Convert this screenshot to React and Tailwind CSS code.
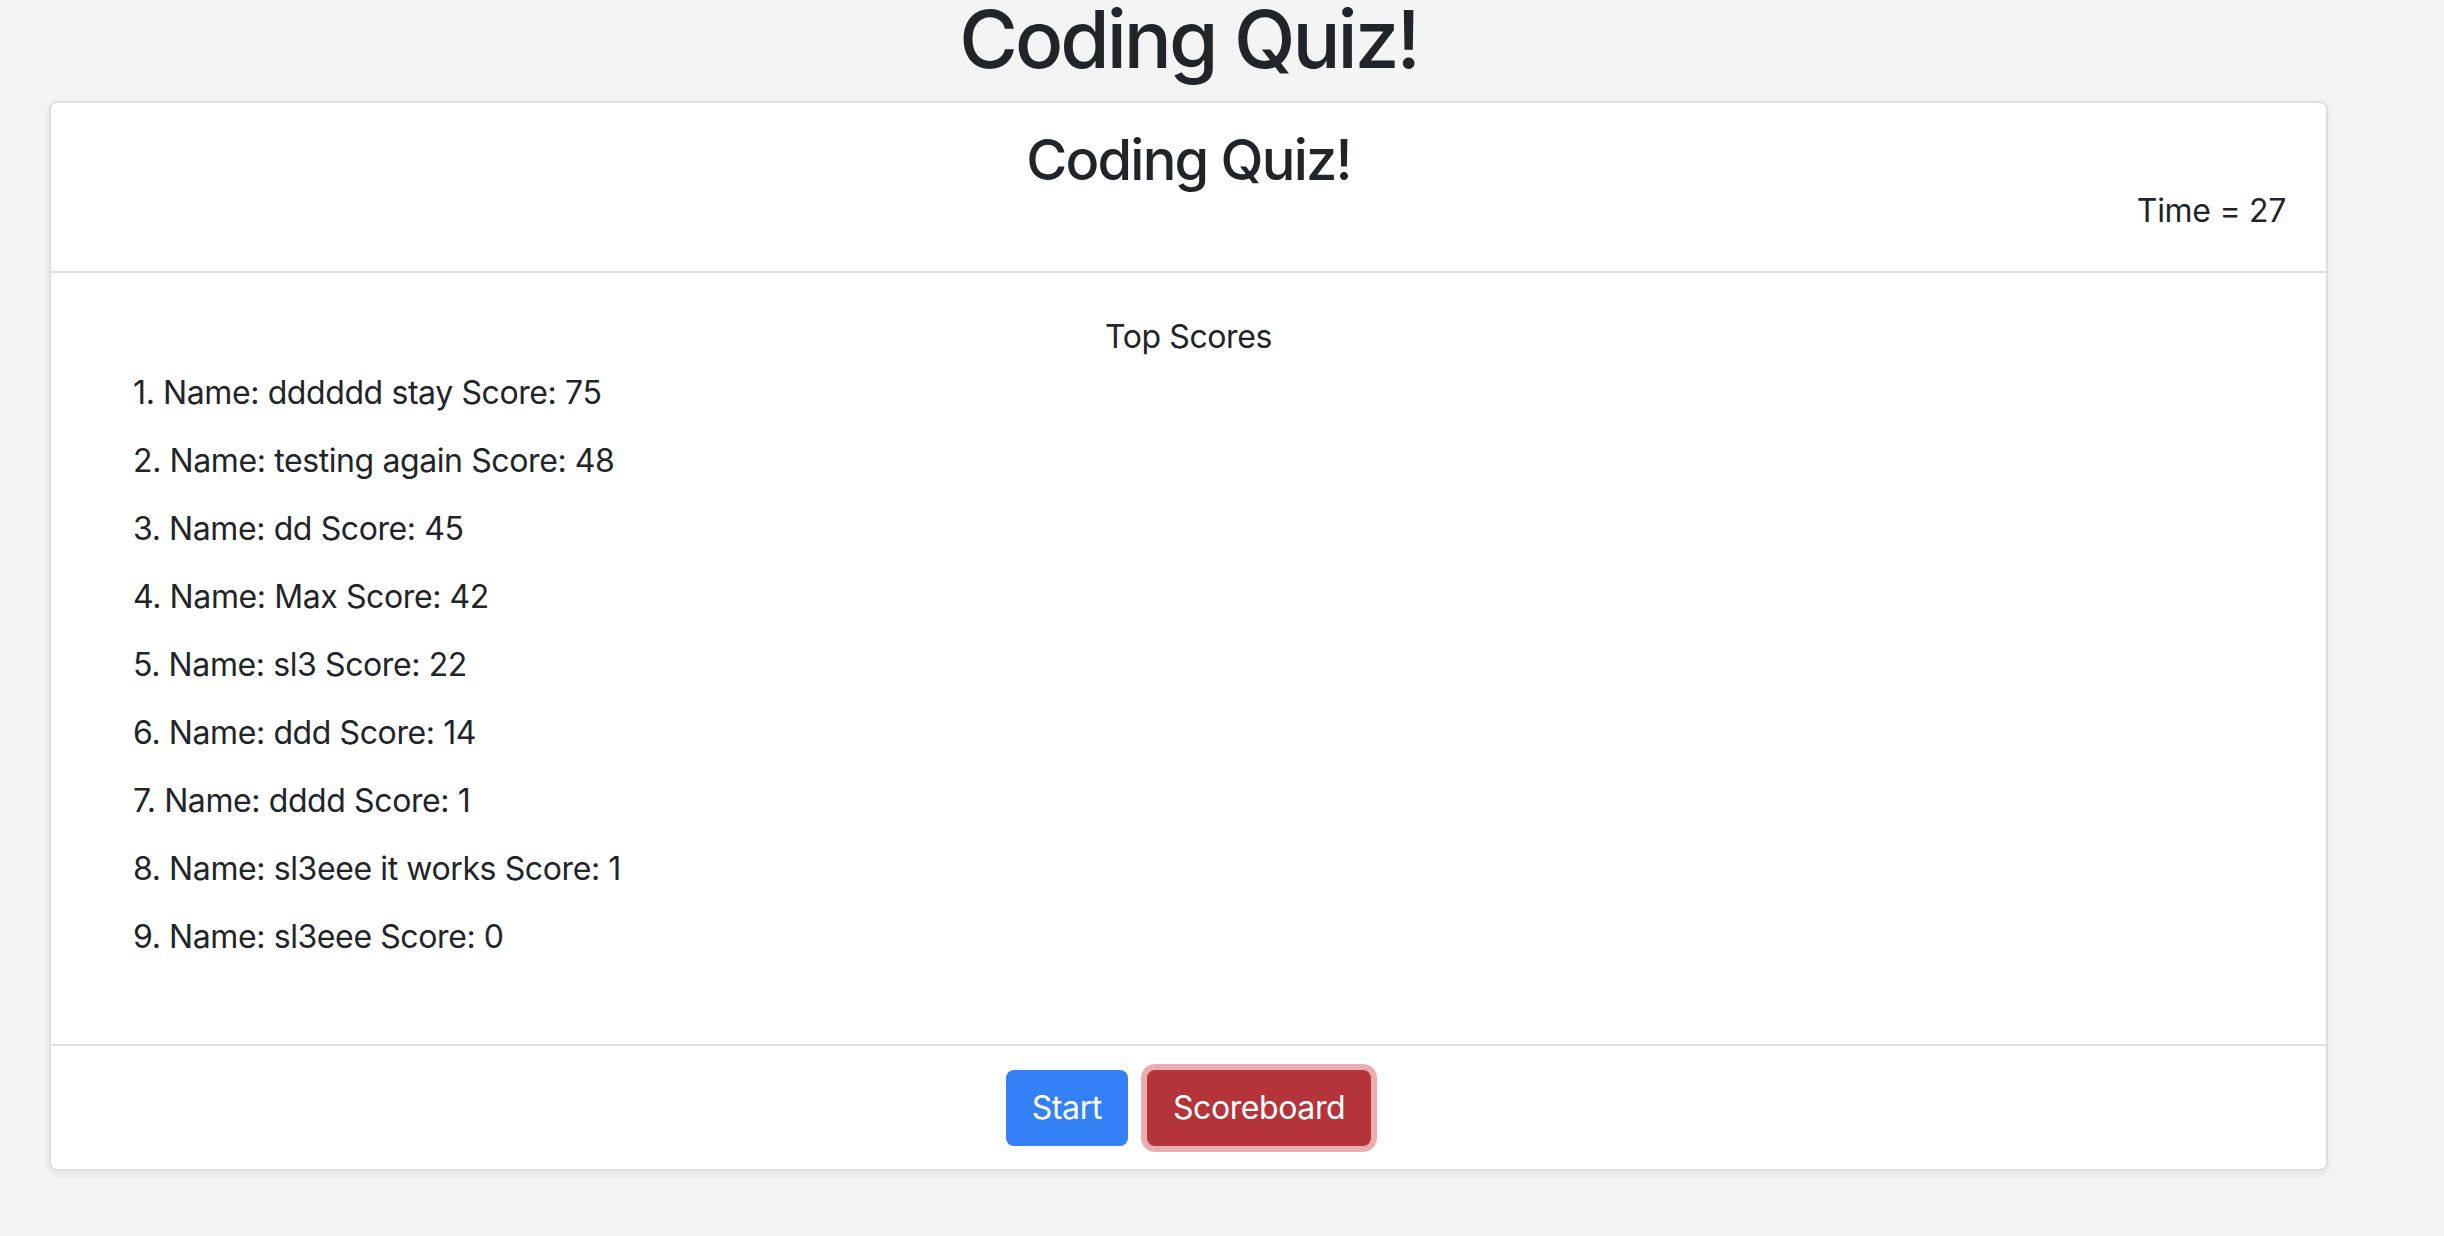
import React from "react";

const scores = [
  { name: "dddddd stay", score: 75 },
  { name: "testing again", score: 48 },
  { name: "dd", score: 45 },
  { name: "Max", score: 42 },
  { name: "sl3", score: 22 },
  { name: "ddd", score: 14 },
  { name: "dddd", score: 1 },
  { name: "sl3eee it works", score: 1 },
  { name: "sl3eee", score: 0 },
];

export default function App() {
  return (
    <div className="min-h-[1236px] w-full bg-[#f4f4f4] font-['Inter',sans-serif] text-[#212529]">
      <div className="ml-[49px] w-[2279px]">
        <h1 className="text-center text-[80px] leading-[78px] font-medium tracking-[-3px] mb-[23px]">Coding Quiz!</h1>
        <div className="rounded-[8px] border-2 border-[#dfdfdf] bg-white shadow-[0_3px_8px_rgba(0,0,0,0.07)]">
          <div className="border-b-2 border-[#dfdfdf] px-[40px] pt-[24px] pb-[36px]">
            <h3 className="text-center text-[56px] leading-[67px] font-medium tracking-[-1.8px]">Coding Quiz!</h3>
            <div className="text-right text-[32px] leading-[48px] mt-[-7px] tracking-[-0.3px]">Time = 27</div>
          </div>
          <div className="px-[40px] pt-[40px] pb-[83px] text-[32px] leading-[48px] tracking-[-0.4px]">
            <div className="text-center">Top Scores</div>
            <ol className="mt-[8px] pl-[42px] flex flex-col gap-[20px]">
              {scores.map((s, i) => (
                <li key={i}>
                  {i + 1}. Name: {s.name} Score: {s.score}
                </li>
              ))}
            </ol>
          </div>
          <div className="border-t-2 border-[#dfdfdf] px-[40px] pt-[24px] pb-[23px] flex justify-center gap-[19px]">
            <button className="rounded-[8px] bg-[#3480f6] border-2 border-[#3480f6] px-[24px] py-[12px] text-[32px] leading-[48px] tracking-[-0.4px] text-white">Start</button>
            <button className="rounded-[8px] bg-[#b5343a] border-2 border-[#b5343a] px-[24px] py-[12px] text-[32px] leading-[48px] tracking-[-0.4px] text-white shadow-[0_0_0_6px_#eaaeb1]">Scoreboard</button>
          </div>
        </div>
      </div>
    </div>
  );
}
